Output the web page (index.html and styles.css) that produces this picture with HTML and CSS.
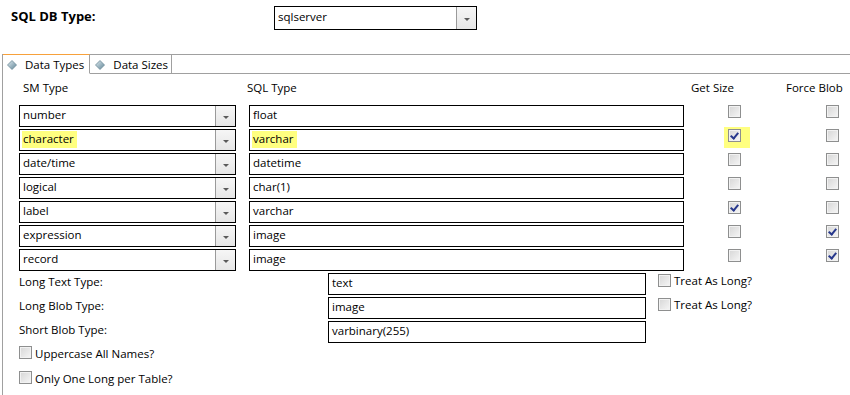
FILE: index.html
```html
<!DOCTYPE html>
<html lang="en">
<head>
    <meta charset="UTF-8">
    <title>SQL DB Type</title>
    <link rel="stylesheet" href="styles.css">
</head>
<body>
    <div class="top">
        <div class="top-label">SQL DB Type:</div>
        <div class="combo combo-db">
            <span class="combo-text">sqlserver</span>
            <span class="combo-btn"><i class="arrow"></i></span>
        </div>
    </div>
    <div class="folder">
        <div class="tabs">
            <div class="tab active">
                <svg class="tab-icon" width="10" height="10" viewBox="0 0 10 10"><defs><linearGradient id="dg" x1="0" y1="0" x2="1" y2="1"><stop offset="0" stop-color="#e3eef3"/><stop offset="1" stop-color="#5b8193"/></linearGradient></defs><path d="M5 0.5 L9.5 5 L5 9.5 L0.5 5 Z" fill="url(#dg)" stroke="#6a8898" stroke-width="0.8"/></svg>
                Data Types
            </div>
            <div class="tab">
                <svg class="tab-icon" width="10" height="10" viewBox="0 0 10 10"><path d="M5 0.5 L9.5 5 L5 9.5 L0.5 5 Z" fill="url(#dg)" stroke="#6a8898" stroke-width="0.8"/></svg>
                Data Sizes
            </div>
            <div class="tab-fill"></div>
        </div>
        <div class="pane">
            <div class="grid-head">
                <span class="h-sm">SM Type</span>
                <span class="h-sql">SQL Type</span>
                <span class="h-get">Get Size</span>
                <span class="h-force">Force Blob</span>
            </div>

            <div class="map-row">
                <div class="combo"><span class="combo-text">number</span><span class="combo-btn"><i class="arrow"></i></span></div>
                <div class="field sql">float</div>
                <span class="check get"></span>
                <span class="check force"></span>
            </div>
            <div class="map-row">
                <div class="combo"><span class="combo-text"><span class="hl">character</span></span><span class="combo-btn"><i class="arrow"></i></span></div>
                <div class="field sql"><span class="hl">varchar</span></div>
                <span class="check-hl get"><span class="check checked"></span></span>
                <span class="check force"></span>
            </div>
            <div class="map-row">
                <div class="combo"><span class="combo-text">date/time</span><span class="combo-btn"><i class="arrow"></i></span></div>
                <div class="field sql">datetime</div>
                <span class="check get"></span>
                <span class="check force"></span>
            </div>
            <div class="map-row">
                <div class="combo"><span class="combo-text">logical</span><span class="combo-btn"><i class="arrow"></i></span></div>
                <div class="field sql">char(1)</div>
                <span class="check get"></span>
                <span class="check force"></span>
            </div>
            <div class="map-row">
                <div class="combo"><span class="combo-text">label</span><span class="combo-btn"><i class="arrow"></i></span></div>
                <div class="field sql">varchar</div>
                <span class="check get checked"></span>
                <span class="check force"></span>
            </div>
            <div class="map-row">
                <div class="combo"><span class="combo-text">expression</span><span class="combo-btn"><i class="arrow"></i></span></div>
                <div class="field sql">image</div>
                <span class="check get"></span>
                <span class="check force checked"></span>
            </div>
            <div class="map-row">
                <div class="combo"><span class="combo-text">record</span><span class="combo-btn"><i class="arrow"></i></span></div>
                <div class="field sql">image</div>
                <span class="check get"></span>
                <span class="check force checked"></span>
            </div>

            <div class="opt-row">
                <div class="opt-label">Long Text Type:</div>
                <div class="field opt">text</div>
                <span class="check treat"></span><span class="check-text">Treat As Long?</span>
            </div>
            <div class="opt-row">
                <div class="opt-label">Long Blob Type:</div>
                <div class="field opt">image</div>
                <span class="check treat"></span><span class="check-text">Treat As Long?</span>
            </div>
            <div class="opt-row">
                <div class="opt-label">Short Blob Type:</div>
                <div class="field opt">varbinary(255)</div>
            </div>

            <div class="flag-row"><span class="check"></span><span class="check-text">Uppercase All Names?</span></div>
            <div class="flag-row"><span class="check"></span><span class="check-text">Only One Long per Table?</span></div>
        </div>
    </div>
</body>
</html>
```

FILE: styles.css
```css
body {
    margin: 0;
    font-family: "Open Sans", "Noto Sans", sans-serif;
    font-size: 11.5px;
    color: #000;
    background: #fff;
    height: 395px;
    overflow: hidden;
}
.top {
    display: flex;
    height: 54px;
    padding-left: 11px;
}
.top-label {
    width: 263px;
    font-weight: bold;
    font-size: 13px;
    line-height: 16px;
    margin-top: 8px;
}
.combo {
    display: flex;
    width: 217px;
    height: 22px;
    box-sizing: border-box;
    border: 1px solid #000;
    background: #fff;
}
.combo-db {
    width: 203px;
    height: 24px;
    margin-top: 6px;
}
.combo-text {
    flex: 1;
    padding-left: 3px;
    line-height: 17px;
    white-space: nowrap;
}
.combo-db .combo-text {
    line-height: 19px;
}
.combo-btn {
    width: 19px;
    border-left: 1px solid #9a9a9a;
    background: linear-gradient(#f6f6f6, #e6e6e6);
    display: flex;
    align-items: center;
    justify-content: center;
}
.arrow {
    width: 0;
    height: 0;
    border-left: 3px solid transparent;
    border-right: 3px solid transparent;
    border-top: 3px solid #5a5a5a;
    margin-top: 2px;
}
.folder {
    margin-left: 2px;
    border-left: 1px solid #a0a0a0;
    height: 341px;
}
.tabs {
    display: flex;
    height: 20px;
}
.tab {
    display: flex;
    align-items: center;
    height: 20px;
    box-sizing: border-box;
    padding: 0 5px 0 4px;
    border-top: 1px solid #a0a0a0;
    border-right: 1px solid #a0a0a0;
    border-bottom: 1px solid #a0a0a0;
    white-space: nowrap;
}
.tab.active {
    border-top: 1px solid #f7a13b;
    border-bottom-color: #fff;
}
.tab + .tab {
    padding: 0 3px 0 5px;
}
.tab-icon {
    margin-right: 8px;
    margin-top: 1px;
}
.tab-fill {
    flex: 1;
    border-top: 1px solid #a0a0a0;
    border-bottom: 1px solid #a0a0a0;
}
.pane {
    padding: 6px 0 0 16px;
}
.grid-head {
    display: flex;
    height: 16px;
    line-height: 16px;
    margin-bottom: 9px;
}
.h-sm {
    margin-left: 4px;
    width: 224px;
}
.h-sql {
    width: 444px;
}
.h-get {
    width: 95px;
}
.map-row, .opt-row {
    display: flex;
    height: 22px;
    margin-bottom: 2px;
}
.field {
    height: 22px;
    box-sizing: border-box;
    border: 1px solid #000;
    padding-left: 3px;
    line-height: 17px;
    white-space: nowrap;
}
.field.sql {
    width: 435px;
    margin-left: 13px;
}
.hl {
    display: inline-block;
    background: #ffff80;
    margin-left: -1px;
    padding: 0 3px 0 1px;
    height: 17px;
    margin-top: 1px;
    line-height: 16px;
    vertical-align: top;
}
.check {
    display: inline-block;
    width: 13px;
    height: 13px;
    box-sizing: border-box;
    border: 1px solid #8e8f8f;
    background: linear-gradient(135deg, #d6d6d6, #f6f6f6);
    box-shadow: inset 0 0 0 1px #f2f2f2;
    flex-shrink: 0;
    position: relative;
}
.check.checked::after {
    content: "";
    position: absolute;
    left: 3px;
    top: 1px;
    width: 3px;
    height: 6px;
    border-right: 2px solid #26378c;
    border-bottom: 2px solid #26378c;
    transform: rotate(40deg);
}
.check.get {
    margin-left: 44px;
}
.check-hl {
    display: inline-block;
    background: #ffff80;
    margin: -2px 0 -6px 40px;
    padding: 2px 9px 6px 4px;
    height: 13px;
}
.check-hl .check {
    display: block;
}
.check.force {
    margin-left: 85px;
}
.map-row .check-hl + .check.force {
    margin-left: 76px;
}
.opt-label {
    width: 309px;
    line-height: 17px;
}
.field.opt {
    width: 318px;
}
.check.treat {
    margin-left: 12px;
    margin-top: 1px;
}
.check-text {
    margin-left: 3px;
    line-height: 15px;
}
.flag-row {
    display: flex;
    height: 22px;
    margin-bottom: 2px;
    padding-top: 1px;
}
```
